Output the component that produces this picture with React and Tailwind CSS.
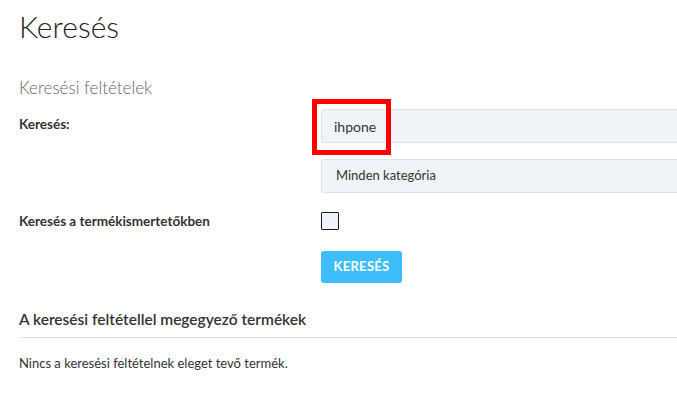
export default function App() {
  const font = { fontFamily: '"Source Sans Pro", Lato, "Noto Sans", sans-serif' };
  return (
    <div className="relative w-[677px] h-[410px] overflow-hidden bg-white text-[#333]" style={font}>
      <div className="pl-[19px] w-[720px]">
        <h1 className="pt-[6px] text-[30px] leading-[40px] font-light text-[#222]">Keresés</h1>
        <h2 className="mt-[31px] text-[17px] leading-[22px] font-light text-[#666]">Keresési feltételek</h2>

        <div className="mt-[10px] flex">
          <label className="w-[302px] pt-[5px] text-[13.5px] font-bold text-[#333]">Keresés:</label>
          <div className="flex-1 flex flex-col gap-[16px]">
            <div className="relative">
              <div className="h-[34px] flex items-center px-[12px] bg-[#f0f3f8] border border-[#dbe2f0] rounded-[3px] text-[14px] text-[#333]">
                ihpone
              </div>
              <div className="absolute left-[-9px] top-[-10px] w-[79px] h-[56px] border-[5px] border-[#ff0000] pointer-events-none" />
            </div>
            <div className="h-[34px] flex items-center px-[14px] bg-[#f0f3f8] border border-[#dbe2f0] rounded-[3px] text-[13px] text-[#333]">
              Minden kategória
            </div>
          </div>
        </div>

        <div className="mt-[19px] flex">
          <label className="w-[302px] text-[13.5px] font-bold text-[#333] leading-[16px] pt-[1px]">Keresés a termékismertetőkben</label>
          <div className="flex-1">
            <div className="w-[18px] h-[18px] bg-[#f0f3f8] border border-[#1a1a2e] rounded-[1px]" />
          </div>
        </div>

        <div className="mt-[21px] pl-[302px]">
          <button className="h-[32px] w-[81px] bg-[#3dbdfa] rounded-[3px] text-white text-[13px] font-bold tracking-[0.3px]">
            KERESÉS
          </button>
        </div>

        <h3 className="mt-[25px] text-[15.5px] leading-[22px] font-semibold text-[#333]">A keresési feltétellel megegyező termékek</h3>
        <div className="mt-[7px] border-t border-[#e2e2e2]" />
        <p className="mt-[16px] text-[13px] leading-[18px] text-[#333]">Nincs a keresési feltételnek eleget tevő termék.</p>
      </div>
    </div>
  );
}
